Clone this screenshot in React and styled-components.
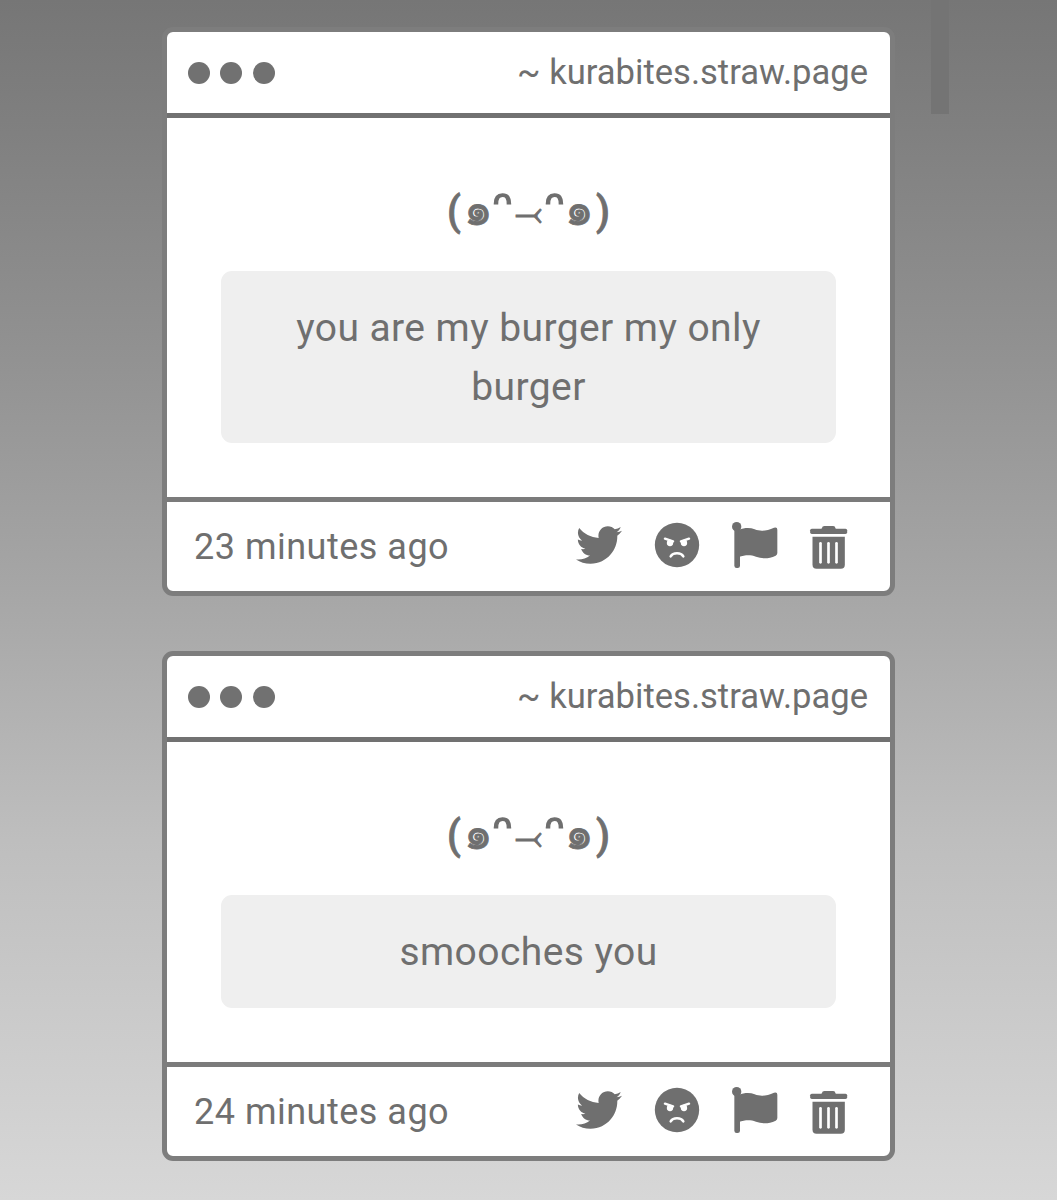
import React from 'react';
import styled, { createGlobalStyle } from 'styled-components';
import { FaTwitter } from 'react-icons/fa';

const GlobalStyle = createGlobalStyle`
  * {
    box-sizing: border-box;
  }

  body {
    margin: 0;
    color: #6f6f6f;
    font-family: Roboto, sans-serif;
  }
`;

const Page = styled.main`
  position: relative;
  min-height: 1200px;
  padding-top: 27px;
  display: flex;
  flex-direction: column;
  align-items: center;
  gap: 55px;
  overflow: hidden;
  background: linear-gradient(#767676 0, #7f7f7f 120px, #929292 360px, #a7a7a7 600px, #bebebe 840px, #d7d7d7 1200px);
`;

const Scrollbar = styled.div`
  position: absolute;
  top: 0;
  left: 931px;
  width: 18px;
  height: 114px;
  background: #747474;
`;

const Card = styled.article`
  width: 733px;
  border: 5px solid #7d7d7d;
  border-radius: 11px;
  background: #fff;
`;

const Header = styled.header`
  height: 86px;
  padding: 0 22px 0 21px;
  display: flex;
  align-items: center;
  justify-content: space-between;
  border-bottom: 5px solid #717171;
`;

const Dots = styled.div`
  display: flex;
  gap: 10.4px;
`;

const Dot = styled.span`
  width: 22px;
  height: 22px;
  border-radius: 50%;
  background: #717171;
`;

const Site = styled.span`
  padding-bottom: 2px;
  font-size: 34.6px;
  line-height: 40px;
`;

const Body = styled.section`
  padding: 60px 54px 54px;
`;

const Kaomoji = styled.h2`
  height: 60px;
  margin: 0 0 33px;
  display: flex;
  align-items: baseline;
  justify-content: center;
  font-weight: 500;
  line-height: 60px;
`;

const Glyph = styled.span`
  width: ${props => props.$width}px;
  display: flex;
  justify-content: center;
  font-size: ${props => props.$size}px;
  -webkit-text-stroke: ${props => props.$stroke}px currentColor;
`;

const Message = styled.p`
  margin: 0;
  padding: 28px 54px 26px;
  border-radius: 11px;
  background: #efefef;
  font-size: 39px;
  line-height: 59px;
  letter-spacing: 0.42px;
  text-align: center;
`;

const Footer = styled.footer`
  height: 94px;
  padding: 0 38.5px 0 27px;
  display: flex;
  align-items: center;
  justify-content: space-between;
  border-top: 5px solid #7b7b7b;
`;

const Time = styled.time`
  font-size: 36px;
  letter-spacing: 0.5px;
`;

const Actions = styled.div`
  padding-bottom: 4px;
  display: flex;
  align-items: center;
  gap: 31.8px;

  svg {
    width: 46px;
    height: 46px;
    overflow: visible;
  }

  svg:last-child {
    margin-left: -4.3px;
  }
`;

const face = [
  { char: '(', width: 22, size: 40, stroke: 0.8 },
  { char: '๑', width: 26, size: 45, stroke: 0.8 },
  { char: 'ᵔ', width: 23, size: 50, stroke: 1.4 },
  { char: '⤙', width: 29, size: 34, stroke: 0.9 },
  { char: 'ᵔ', width: 23, size: 50, stroke: 1.4 },
  { char: '๑', width: 26, size: 45, stroke: 0.8 },
  { char: ')', width: 22, size: 40, stroke: 0.8 },
];

const messages = [
  { id: 1, text: 'you are my burger my only burger', time: '23 minutes ago' },
  { id: 2, text: 'smooches you', time: '24 minutes ago' },
];

function AngryIcon() {
  return (
    <svg viewBox="0 0 138 138" fill="currentColor">
      <circle cx="69" cy="69" r="66.5" />
      <g fill="#fff" stroke="#fff" strokeLinecap="round">
        <path d="M33 50 57 58M105 50 81 58" strokeWidth="7.5" />
        <circle cx="48" cy="63" r="9.5" stroke="none" />
        <circle cx="90" cy="63" r="9.5" stroke="none" />
        <path d="M50 103C57 91 81 91 88 103" fill="none" strokeWidth="7.5" />
      </g>
    </svg>
  );
}

function FlagIcon() {
  return (
    <svg viewBox="0 0 138 138" fill="currentColor">
      <circle cx="14" cy="14" r="14" />
      <rect x="7" y="14" width="17" height="124" rx="7" />
      <path d="M20 23C38 17 54 16 68 22C88 30 106 26 126 17Q136 14 136 23V93Q136 98 131 101C108 112 90 110 72 104C54 98 40 99 20 105Z" />
    </svg>
  );
}

function TrashIcon() {
  return (
    <svg viewBox="-12.5 -12 138 138" fill="currentColor">
      <path d="M35 10V7Q36 0 43 0H69Q75 0 76 7V10Z" />
      <rect y="8" width="111" height="16" rx="5" />
      <path d="M7 32H104V116Q104 128 92 128H19Q7 128 7 116Z" />
      <g fill="#fff">
        <rect x="27" y="48" width="8" height="65" rx="4" />
        <rect x="51" y="48" width="8" height="65" rx="4" />
        <rect x="75" y="48" width="8" height="65" rx="4" />
      </g>
    </svg>
  );
}

function MessageCard({ text, time }) {
  return (
    <Card>
      <Header>
        <Dots>
          <Dot />
          <Dot />
          <Dot />
        </Dots>
        <Site>~ kurabites.straw.page</Site>
      </Header>
      <Body>
        <Kaomoji>
          {face.map((glyph, index) => (
            <Glyph key={index} $width={glyph.width} $size={glyph.size} $stroke={glyph.stroke}>
              {glyph.char}
            </Glyph>
          ))}
        </Kaomoji>
        <Message>{text}</Message>
      </Body>
      <Footer>
        <Time>{time}</Time>
        <Actions>
          <FaTwitter />
          <AngryIcon />
          <FlagIcon />
          <TrashIcon />
        </Actions>
      </Footer>
    </Card>
  );
}

export default function App() {
  return (
    <>
      <GlobalStyle />
      <Page>
        <Scrollbar />
        {messages.map(message => (
          <MessageCard key={message.id} text={message.text} time={message.time} />
        ))}
      </Page>
    </>
  );
}
